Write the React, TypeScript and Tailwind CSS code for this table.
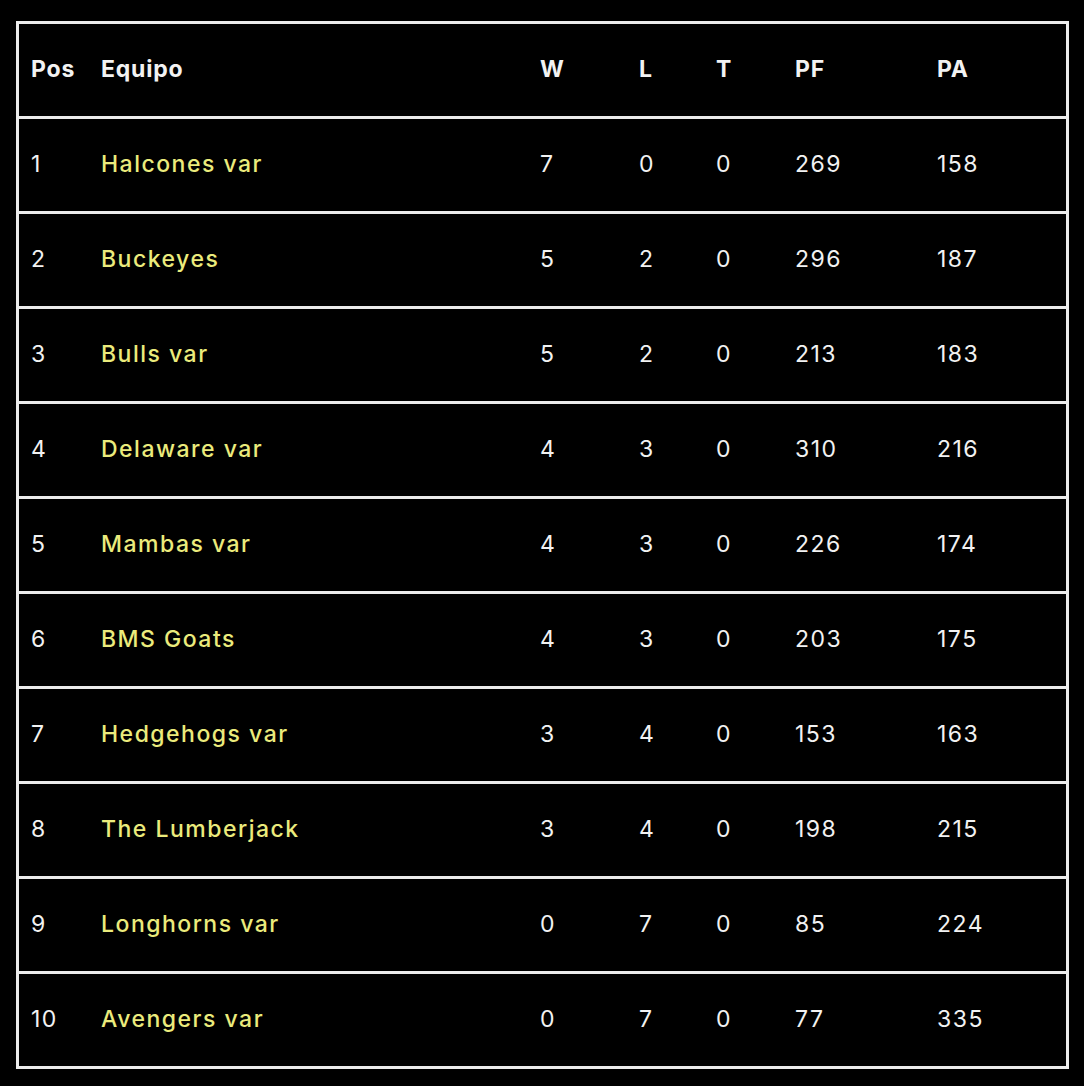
import React from 'react';

interface TeamRow {
  pos: number;
  team: string;
  w: number;
  l: number;
  t: number;
  pf: number;
  pa: number;
}

const rows: TeamRow[] = [
  { pos: 1, team: 'Halcones var', w: 7, l: 0, t: 0, pf: 269, pa: 158 },
  { pos: 2, team: 'Buckeyes', w: 5, l: 2, t: 0, pf: 296, pa: 187 },
  { pos: 3, team: 'Bulls var', w: 5, l: 2, t: 0, pf: 213, pa: 183 },
  { pos: 4, team: 'Delaware var', w: 4, l: 3, t: 0, pf: 310, pa: 216 },
  { pos: 5, team: 'Mambas var', w: 4, l: 3, t: 0, pf: 226, pa: 174 },
  { pos: 6, team: 'BMS Goats', w: 4, l: 3, t: 0, pf: 203, pa: 175 },
  { pos: 7, team: 'Hedgehogs var', w: 3, l: 4, t: 0, pf: 153, pa: 163 },
  { pos: 8, team: 'The Lumberjack', w: 3, l: 4, t: 0, pf: 198, pa: 215 },
  { pos: 9, team: 'Longhorns var', w: 0, l: 7, t: 0, pf: 85, pa: 224 },
  { pos: 10, team: 'Avengers var', w: 0, l: 7, t: 0, pf: 77, pa: 335 },
];

// column template shared by header and body rows
const cols = 'box-content grid grid-cols-[70px_439px_99px_77px_79px_142px_1fr] items-center h-[90px] pb-[2px]';

export default function App() {
  return (
    <div className="min-h-[1086px] bg-black pt-[21px] pl-4 font-['Inter',_'Liberation_Sans',_sans-serif] text-[23px] tracking-[0.065em] text-[#f2f2f2]">
      <div className="w-[1053px] border-[3px] border-[#ececec] divide-y-[3px] divide-[#ececec]">
        <div className={`${cols} font-bold tracking-[0.035em]`}>
          <div className="pl-3">Pos</div>
          <div className="pl-3">Equipo</div>
          <div className="pl-3">W</div>
          <div className="pl-3">L</div>
          <div className="pl-3">T</div>
          <div className="pl-3">PF</div>
          <div className="pl-3">PA</div>
        </div>
        {rows.map(r => (
          <div key={r.pos} className={cols}>
            <div className="pl-3">{r.pos}</div>
            <div className="pl-3 font-medium text-[#ebeb7c]">{r.team}</div>
            <div className="pl-3">{r.w}</div>
            <div className="pl-3">{r.l}</div>
            <div className="pl-3">{r.t}</div>
            <div className="pl-3">{r.pf}</div>
            <div className="pl-3">{r.pa}</div>
          </div>
        ))}
      </div>
    </div>
  );
}
